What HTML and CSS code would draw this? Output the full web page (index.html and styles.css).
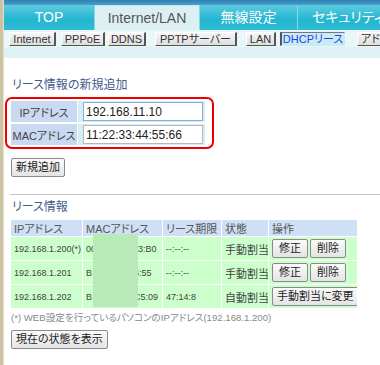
FILE: index.html
```html
<!doctype html>
<html>
<head>
<meta charset="utf-8">
<title>DHCPリース</title>
<link rel="stylesheet" href="styles.css">
</head>
<body>
<div class="side"></div>
<div class="main">
	<div class="topline"></div>
	<div class="tabs">
		<div class="tab t1">TOP</div>
		<div class="tab t2 on">Internet/LAN</div>
		<div class="tab t3">無線設定</div>
		<div class="tab t4">セキュリティー</div>
	</div>
	<div class="subtabs">
		<span class="sub s1">Internet</span>
		<span class="sub s2">PPPoE</span>
		<span class="sub s3">DDNS</span>
		<span class="sub s4">PPTPサーバー</span>
		<span class="sub s5">LAN</span>
		<span class="sub s6 on">DHCPリース</span>
		<span class="sub s7">アドレス変換</span>
	</div>
	<div class="band"></div>

	<div class="content">
		<h2 class="title first">リース情報の新規追加</h2>
		<div class="redbox">
			<table class="addtbl">
				<tr><th>IPアドレス</th><td><input class="inp focus" value="192.168.11.10"></td></tr>
				<tr><th>MACアドレス</th><td><input class="inp" value="11:22:33:44:55:66"></td></tr>
			</table>
		</div>
		<button class="btn addbtn">新規追加</button>

		<div class="divider"></div>

		<h2 class="title second">リース情報</h2>
		<div class="listwrap">
			<table class="list">
				<tr class="head">
					<th class="c1">IPアドレス</th>
					<th class="c2">MACアドレス</th>
					<th class="c3">リース期限</th>
					<th class="c4">状態</th>
					<th class="c5">操作</th>
				</tr>
				<tr>
					<td class="small">192.168.1.200(*)</td>
					<td class="small mac"><span>00</span><span>3:B0</span></td>
					<td class="small">--:--:--</td>
					<td>手動割当</td>
					<td><button class="btn op">修正</button><button class="btn op">削除</button></td>
				</tr>
				<tr>
					<td class="small">192.168.1.201</td>
					<td class="small mac"><span>B</span><span>6:55</span></td>
					<td class="small">--:--:--</td>
					<td>手動割当</td>
					<td><button class="btn op">修正</button><button class="btn op">削除</button></td>
				</tr>
				<tr>
					<td class="small">192.168.1.202</td>
					<td class="small mac"><span>B</span><span>C5:09</span></td>
					<td class="small">47:14:8</td>
					<td>自動割当</td>
					<td><button class="btn op wide">手動割当に変更</button></td>
				</tr>
			</table>
			<div class="mask"></div>
		</div>
		<p class="note">(*) WEB設定を行っているパソコンのIPアドレス(192.168.1.200)</p>
		<button class="btn showbtn">現在の状態を表示</button>
	</div>
</div>
</body>
</html>
```

FILE: styles.css
```css
body
{
	margin: 0;
	display: flex;
	height: 365px;
	background: #fff;
	font-family: "Liberation Sans", "Noto Sans CJK JP", sans-serif;
	font-feature-settings: "palt";
	font-size: 11px;
	color: #333;
	overflow: hidden;
	white-space: nowrap;
}
.side
{
	width: 3px;
	flex: none;
	background: #cbc3a3;
	border-right: 1px solid #e6e0cc;
}
.main
{
	flex: 1;
	min-width: 0;
	overflow: hidden;
}
/*上のタブ*/
.topline
{
	height: 5px;
	background: linear-gradient(#2f7fb4, #4aa0c8);
}
.tabs
{
	display: flex;
	height: 25px;
	overflow: hidden;
	background: linear-gradient(#5ccbe0, #22b6d0 60%, #30bcd4);
}
.tab
{
	color: #fff;
	font-size: 14px;
	line-height: 25px;
	text-align: center;
	border-right: 1px solid #8ad8e6;
	flex: none;
}
.t1 { width: 90px; }
.t2 { width: 104px; }
.t3 { width: 97px; }
.t4 { flex: 1; border-right: none; text-align: left; padding-left: 14px; overflow: hidden; }
.tab.on
{
	background: #dcf0f4;
	color: #555;
	border-top: 1px solid #c6e6ee;
}
/*サブタブ*/
.subtabs
{
	height: 15px;
	padding-top: 2px;
	background: #eaf7f9;
	display: flex;
	align-items: flex-start;
	overflow: hidden;
}
.sub
{
	display: block;
	box-sizing: border-box;
	height: 14px;
	line-height: 12px;
	text-align: center;
	font-size: 11px;
	color: #333;
	background: linear-gradient(#f6f6f6, #dedede);
	border-right: 2px solid #555;
	border-bottom: 1px solid #555;
	border-top: 1px solid #fff;
	border-left: 1px solid #fff;
	flex: none;
}
.s1 { margin-left: 5px; width: 47px; }
.s2 { margin-left: 5px; width: 44px; }
.s3 { margin-left: 3px; width: 38px; }
.s4 { margin-left: 9px; width: 82px; }
.s5 { margin-left: 9px; width: 30px; }
.s6 { margin-left: 4px; width: 65px; }
.s7 { margin-left: 12px; width: 70px; text-align: left; padding-left: 3px; }
.sub.on
{
	background: #c8ecf6;
	color: #2a3fe6;
	border-left: 2px solid #555;
	border-top: 1px solid #777;
	border-right: 1px solid #c8ecf6;
	border-bottom: 1px solid #c8ecf6;
}
.band
{
	height: 11px;
	background: #def2f5;
}
/*本文*/
.content
{
	padding-left: 8px;
}
.title
{
	margin: 0;
	font-size: 12px;
	font-weight: normal;
	color: #3f5b8c;
	height: 16px;
	line-height: 16px;
}
.title.first
{
	margin-top: 19px;
}
.title.second
{
	margin-top: 4px;
}
.redbox
{
	margin-left: -7px;
	margin-top: 4px;
	width: 199px;
	border: 2px solid #ee0000;
	border-radius: 7px;
	padding: 2px 2px 2px 4px;
	background: #fff;
}
.addtbl
{
	border-collapse: collapse;
	width: 194px;
}
.addtbl th
{
	width: 66px;
	height: 21px;
	padding: 0;
	background: #c9d9f1;
	font-weight: normal;
	color: #444;
	font-size: 11px;
	border-bottom: 2px solid #fff;
	border-right: 1px solid #fff;
}
.addtbl td
{
	background: #d4eef5;
	padding: 0 0 0 5px;
	border-bottom: 2px solid #fff;
}
.addtbl tr:last-child th, .addtbl tr:last-child td
{
	border-bottom: none;
}
.inp
{
	box-sizing: border-box;
	width: 120px;
	height: 19px;
	padding: 0 2px;
	border: 1px solid #b8b8b8;
	font-family: "Liberation Sans", sans-serif;
	font-size: 12px;
	color: #222;
	background: #fff;
	display: block;
}
.inp.focus
{
	border-color: #8ea8d8;
}
.btn
{
	font-family: "Liberation Sans", "Noto Sans CJK JP", sans-serif;
	font-feature-settings: "palt";
	font-size: 11px;
	color: #222;
	background: linear-gradient(#fafafa, #e4e4e4);
	border: 1px solid #8a8a8a;
	border-radius: 2px;
	padding: 0 4px;
	height: 19px;
	line-height: 17px;
}
.addbtn
{
	margin-top: 9px;
	margin-left: -1px;
}
.divider
{
	margin-top: 17px;
	margin-left: -2px;
	border-top: 1px solid #c6c6c6;
}
.listwrap
{
	position: relative;
	margin-top: 5px;
	margin-left: -1px;
	width: 347px;
}
.list
{
	border-collapse: collapse;
	width: 347px;
	table-layout: fixed;
}
.list th
{
	background: #cfe0f6;
	font-weight: normal;
	color: #555;
	text-align: left;
	height: 14px;
	padding: 0 0 0 3px;
	font-size: 11px;
	border-right: 1px solid #fff;
	border-bottom: 1px solid #fff;
}
.list td
{
	background: #ccffcc;
	height: 23px;
	padding: 0 0 0 3px;
	color: #444;
	border-right: 1px solid #fff;
	border-bottom: 1px solid #fff;
	overflow: hidden;
}
.list td.small
{
	font-size: 9px;
}
.c1 { width: 68px; }
.c2 { width: 76px; }
.c3 { width: 55px; }
.c4 { width: 43px; }
.mac span:last-child
{
	margin-left: 42px;
}
.op
{
	margin-right: 2px;
	padding: 0 6px;
}
.op.wide
{
	padding: 0 4px;
}
.mask
{
	position: absolute;
	left: 82px;
	top: 14px;
	width: 45px;
	height: 73px;
	background: #b9e8b9;
}
.note
{
	margin: 1px 0 0 -1px;
	font-size: 9.6px;
	color: #888;
}
.showbtn
{
	margin-top: 6px;
	margin-left: -1px;
}
```
